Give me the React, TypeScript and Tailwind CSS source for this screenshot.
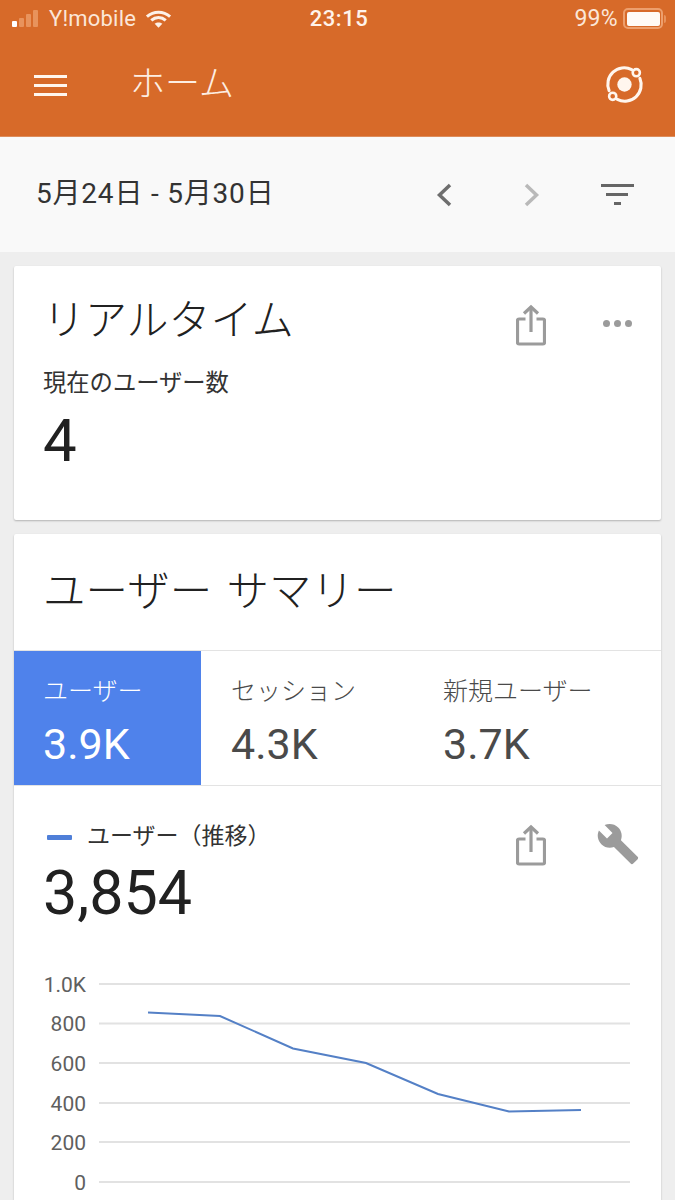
const fontStack = 'font-["Roboto","Noto_Sans_CJK_JP",sans-serif]';

function ShareIcon({ className }: { className?: string }) {
  return (
    <svg viewBox="0 0 30 42" className={className} fill="none" stroke="#9b9b9b" strokeWidth="3.200">
      <path d="M9.5 15H3a1.5 1.5 0 0 0-1.5 1.5v22A1.5 1.5 0 0 0 3 40h24a1.5 1.5 0 0 0 1.5-1.5v-22A1.5 1.5 0 0 0 27 15h-6.500" />
      <path d="M15 28V3" />
      <path d="M8 9.500 15 3l7 6.500" />
    </svg>
  );
}

function StatusBar() {
  return (
    <div className="grid grid-cols-[1fr_auto_1fr] items-center h-[37px] pl-3 pr-[9px] text-[22px] text-[#fbe6d8]">
      <div className="flex items-center">
        <div className="flex items-end gap-[2px] h-[17px] w-[30px]">
          <span className="w-[5px] h-[6px] bg-white rounded-[1px]" />
          <span className="w-[5px] h-[9px] bg-[#e8935c] rounded-[1px]" />
          <span className="w-[5px] h-[13px] bg-[#e8935c] rounded-[1px]" />
          <span className="w-[5px] h-[17px] bg-[#e8935c] rounded-[1px]" />
        </div>
        <span className="ml-[7px] tracking-[0.2px]">Y!mobile</span>
        <svg viewBox="0 0 28 20" className="ml-[9px] w-[27px] h-[20px]" fill="none" stroke="#fdf1e8" strokeWidth="3.200">
          <path d="M2 7.500c7-6 17-6 24 0" />
          <path d="M6.500 11.500c4.500-4 10.500-4 15 0" />
          <path d="M14 19l-4-4c2.300-2 5.700-2 8 0z" fill="#fdf1e8" stroke="none" />
        </svg>
      </div>
      <span className="font-medium text-[#fff3ea] tracking-[0.5px]">23:15</span>
      <div className="flex items-center justify-end">
        <span className="text-[23px] tracking-[0.3px] mt-[1px]">99%</span>
        <div className="ml-[5px] flex items-center justify-center w-[40px] h-[21px] border-2 border-[#ed9f6d] rounded-[5px]">
          <div className="w-[33px] h-[14px] bg-[#fffaf5] rounded-[2px]" />
        </div>
        <span className="ml-[1px] w-[2px] h-[8px] bg-[#e8935c] rounded-r-sm" />
      </div>
    </div>
  );
}

function Toolbar() {
  return (
    <div className="flex items-center h-[100px] pb-[2px] pl-[34px] pr-[31px] border-b border-[#dd8d5c]">
      <div className="flex flex-col gap-[6px] w-[33px]">
        <span className="h-[3px] bg-[#fff6ee]" />
        <span className="h-[3px] bg-[#fff6ee]" />
        <span className="h-[3px] bg-[#fff6ee]" />
      </div>
      <span className="ml-[63px] text-[35px] font-light leading-none text-[#fdeee2] -mt-[2px]">ホーム</span>
      <svg viewBox="0 0 38 38" className="ml-auto w-[39px] h-[39px] -mt-[2px]" fill="none">
        <circle cx="19" cy="19" r="7" fill="#fff6ee" />
        <path d="M4 25A16 16 0 0 1 26 4.500" stroke="#fff6ee" strokeWidth="3" strokeLinecap="round" />
        <path d="M34 13A16 16 0 0 1 12 33.500" stroke="#fff6ee" strokeWidth="3" strokeLinecap="round" />
        <circle cx="30.500" cy="7.500" r="3.500" stroke="#fff6ee" strokeWidth="2.500" />
        <circle cx="7.500" cy="30.500" r="3.500" stroke="#fff6ee" strokeWidth="2.500" />
      </svg>
    </div>
  );
}

function DateBar() {
  return (
    <div className="flex items-center h-[115px] pl-[36px] pr-[41px] bg-[#f9f9f9] text-[#333333]">
      <span className="text-[28px] tracking-[0.8px] leading-none -mt-[2px]">5月24日 - 5月30日</span>
      <svg viewBox="0 0 16 24" className="ml-auto mr-[72px] w-[16px] h-[24px]" fill="none" stroke="#6e6e6e" strokeWidth="3.500">
        <path d="M14 2 3.500 12 14 22" />
      </svg>
      <svg viewBox="0 0 16 24" className="mr-[60px] w-[16px] h-[24px]" fill="none" stroke="#b9b9b9" strokeWidth="3.500">
        <path d="M2 2l10.500 10L2 22" />
      </svg>
      <div className="flex flex-col items-center gap-[6px] w-[34px]">
        <span className="w-[33px] h-[3px] bg-[#666666]" />
        <span className="w-[22px] h-[3px] bg-[#666666]" />
        <span className="w-[7px] h-[3px] bg-[#666666]" />
      </div>
    </div>
  );
}

function RealtimeCard() {
  return (
    <div className="h-[254px] bg-white rounded-[2px] shadow-[0_1px_2px_rgba(0,0,0,0.25)] pl-[29px] pr-[29px] pt-[27px]">
      <div className="flex items-start">
        <h2 className="text-[42px] leading-[56px] font-light text-[#212121]">リアルタイム</h2>
        <ShareIcon className="ml-auto mt-[11px] w-[30px] h-[42px]" />
        <div className="ml-[57px] mt-[27px] flex gap-[4px]">
          <span className="w-[7px] h-[7px] rounded-full bg-[#9b9b9b]" />
          <span className="w-[7px] h-[7px] rounded-full bg-[#9b9b9b]" />
          <span className="w-[7px] h-[7px] rounded-full bg-[#9b9b9b]" />
        </div>
      </div>
      <div className="mt-[18px] text-[23.300px] leading-[32px] text-[#333333]">現在のユーザー数</div>
      <div className="mt-[7px] text-[60px] leading-[70px] text-[#212121]">4</div>
    </div>
  );
}

const tabs = [
  { label: 'セッション', value: '4.3K', width: 'w-[212px]' },
  { label: '新規ユーザー', value: '3.7K', width: 'flex-1' },
];

function Tabs() {
  return (
    <div className="flex h-[136px] border-y border-[#e3e3e3]">
      <div className="w-[187px] bg-[#4f82eb] pl-[29px] pt-[26px] text-white">
        <div className="text-[25px] leading-[30px] font-light">ユーザー</div>
        <div className="mt-[12px] text-[43px] leading-[50px]">3.9K</div>
      </div>
      {tabs.map((tab) => (
        <div key={tab.label} className={`${tab.width} pl-[30px] pt-[26px] text-[#4a4a4a]`}>
          <div className="text-[25px] leading-[30px] font-light">{tab.label}</div>
          <div className="mt-[12px] text-[43px] leading-[50px]">{tab.value}</div>
        </div>
      ))}
    </div>
  );
}

const gridLines = [
  { label: '1.0K', y: 24 },
  { label: '800', y: 63.500 },
  { label: '600', y: 103 },
  { label: '400', y: 143 },
  { label: '200', y: 182 },
  { label: '0', y: 222 },
];

function Chart() {
  return (
    <svg viewBox="0 0 647 240" className="mt-[32px] block w-[647px] h-[240px]">
      {gridLines.map((line) => (
        <g key={line.label}>
          <line x1="85" x2="616" y1={line.y} y2={line.y} stroke="#e2e2e2" strokeWidth="2" />
          <text x="72" y={line.y + 7.500} textAnchor="end" fontSize="21" fill="#5f5f5f" fontFamily="Roboto, sans-serif">
            {line.label}
          </text>
        </g>
      ))}
      <polyline
        points="134,52.500 206,56 279,88.500 352,103 424,134 495,151.500 567,150"
        fill="none"
        stroke="#5480c6"
        strokeWidth="2"
      />
    </svg>
  );
}

function SummaryCard() {
  return (
    <div className="flex-1 bg-white rounded-t-[2px] shadow-[0_1px_2px_rgba(0,0,0,0.25)]">
      <h2 className="h-[116px] pl-[29px] pt-[30px] text-[42.500px] leading-[56px] font-light text-[#212121] [word-spacing:4px]">ユーザー サマリー</h2>
      <Tabs />
      <div className="relative pl-[29px] pt-[36px]">
        <div className="flex items-center">
          <span className="ml-[4px] w-[25px] h-[5px] rounded-[1px] bg-[#4f7fd8]" />
          <span className="ml-[15px] text-[23px] leading-[30px] text-[#333333]">ユーザー（推移）</span>
        </div>
        <div className="mt-[6px] text-[61px] leading-[70px] text-[#212121]">3,854</div>
        <ShareIcon className="absolute right-[115px] top-[38px] w-[30px] h-[42px]" />
        <svg viewBox="0 0 24 24" className="absolute right-[21px] top-[36px] w-[44px] h-[44px]" fill="#9b9b9b">
          <path d="M22.700 19l-9.100-9.100c.9-2.300.4-5-1.500-6.900-2-2-5-2.400-7.400-1.300L9 6 6 9 1.600 4.700C.4 7.100.9 10.100 2.900 12.100c1.900 1.900 4.600 2.400 6.900 1.500l9.100 9.100c.4.4 1 .4 1.400 0l2.300-2.300c.5-.4.5-1.100.1-1.400z" />
        </svg>
      </div>
      <Chart />
    </div>
  );
}

export default function App() {
  return (
    <div className={`flex flex-col h-[1200px] overflow-hidden bg-[#eeeeee] ${fontStack}`}>
      <div className="bg-[#d76a29]">
        <StatusBar />
        <Toolbar />
      </div>
      <DateBar />
      <div className="flex flex-1 flex-col gap-[14px] px-[14px] pt-[14px]">
        <RealtimeCard />
        <SummaryCard />
      </div>
    </div>
  );
}
